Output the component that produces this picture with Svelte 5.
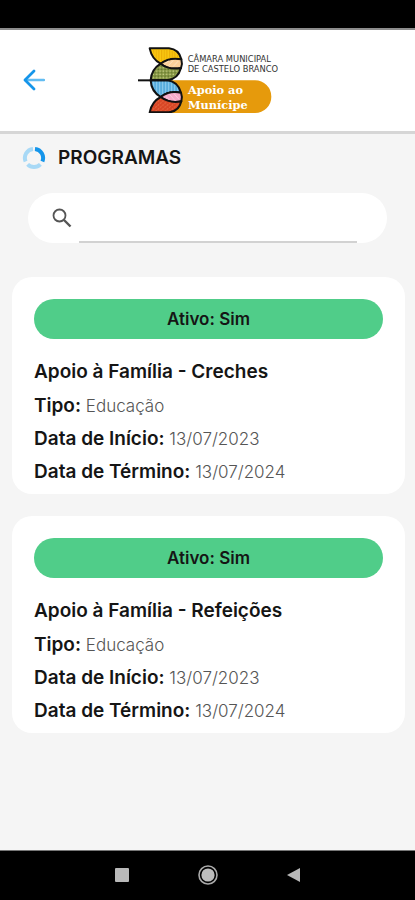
<script>
    let search = '';

    const programs = [
        { name: 'Apoio à Família - Creches', type: 'Educação', start: '13/07/2023', end: '13/07/2024', active: true },
        { name: 'Apoio à Família - Refeições', type: 'Educação', start: '13/07/2023', end: '13/07/2024', active: true }
    ];

    $: visible = programs.filter((p) => p.name.toLowerCase().includes(search.toLowerCase()));
</script>

<svelte:head>
    <title>Programas</title>
</svelte:head>

<div class="screen">
    <div class="status-bar"></div>

    <header>
        <button class="back" aria-label="Voltar">
            <svg width="22" height="22" viewBox="0 0 22 22" fill="none" stroke-linecap="round" stroke-linejoin="round">
                <path d="M2 11H21" stroke="#63bdf2" stroke-width="2.4" />
                <path d="M11 2L2 11L11 20" stroke="#1595ea" stroke-width="2.8" />
            </svg>
        </button>

        <svg class="logo" width="140" height="66" viewBox="27 21 420 198" role="img" aria-label="Câmara Municipal de Castelo Branco, Apoio ao Munícipe">
            <defs>
                <pattern id="stripes" width="8" height="8" patternUnits="userSpaceOnUse">
                    <path d="M2 0V8" stroke="#e09a00" stroke-width="2" />
                </pattern>
                <pattern id="dots" width="10" height="10" patternUnits="userSpaceOnUse">
                    <circle cx="3" cy="3" r="2" fill="#d7dc9a" />
                    <circle cx="8" cy="8" r="2" fill="#4f6425" />
                </pattern>
                <pattern id="waves" width="9" height="9" patternUnits="userSpaceOnUse">
                    <path d="M2 0V9" stroke="#a9dcf5" stroke-width="2" />
                </pattern>
                <pattern id="marks" width="14" height="12" patternUnits="userSpaceOnUse">
                    <path d="M2 4L6 2M9 10L13 8" stroke="#f58a5e" stroke-width="2" />
                </pattern>
            </defs>

            <path d="M125 121H378A49 49 0 0 1 378 219H100Z" fill="#e69a0c" />

            <g stroke="#111" stroke-width="6" stroke-linejoin="round">
                <path d="M62 25H120C140 27 153 41 157 58C135 55 112 59 95 71C76 61 66 45 62 25Z" fill="#f9c811" />
                <path d="M95 71C111 58 135 54 157 58C160 68 159 76 156 84C134 88 111 84 95 71Z" fill="#fbd09a" />
                <path d="M65 121C66 99 77 82 95 71C111 84 134 88 156 84C150 106 134 119 114 121Z" fill="#879744" />
                <path d="M65 121H114C134 123 150 137 156 158C134 154 111 158 95 171C77 160 66 143 65 121Z" fill="#58addd" />
                <path d="M95 171C111 158 134 154 156 158C159 166 160 174 157 184C135 188 112 184 95 171Z" fill="#f5abc9" />
                <path d="M62 217C66 197 76 181 95 171C112 184 135 188 157 184C153 201 140 215 120 217Z" fill="#d84726" />
                <path d="M27 121H116" fill="none" />
            </g>
            <path d="M70 29H119C136 31 147 42 151 54C132 52 112 56 96 67C80 57 73 44 70 29Z" fill="url(#stripes)" />
            <path d="M70 117C71 100 80 85 95 76C111 87 132 91 151 88C145 105 131 115 114 117Z" fill="url(#dots)" />
            <path d="M70 125H114C131 127 145 138 151 154C132 151 111 154 95 166C81 156 72 142 70 125Z" fill="url(#waves)" />
            <path d="M70 213C73 198 80 184 95 176C111 187 132 191 151 188C147 200 136 211 119 213Z" fill="url(#marks)" />
            <path d="M109 70L120 62M118 77L133 61M132 80L148 63M110 168L121 180M120 161L138 182M134 160L150 178" stroke="#fff" stroke-width="2" opacity="0.6" />

            <g class="council">
                <text x="176" y="67">CÂMARA MUNICIPAL</text>
                <text x="176" y="96">DE CASTELO BRANCO</text>
            </g>
            <g class="service">
                <text x="177" y="163">Apoio ao</text>
                <text x="177" y="206">Munícipe</text>
            </g>
        </svg>
    </header>

    <main>
        <div class="title">
            <svg width="24" height="24" viewBox="0 0 24 24" fill="none" stroke-width="4">
                <path d="M13 3A9 9 0 0 1 20.4 15.4" stroke="#1595ea" />
                <path d="M18.4 18.4A9 9 0 0 1 5.6 18.4" stroke="#a8d9f6" />
                <path d="M3.6 15.4A9 9 0 0 1 11 3" stroke="#a8d9f6" />
            </svg>
            <h1>PROGRAMAS</h1>
        </div>

        <label class="search">
            <svg width="20" height="20" viewBox="0 0 20 20" fill="none" stroke="#555" stroke-width="1.8">
                <circle cx="7.5" cy="7.5" r="6" />
                <path d="M12 12L18.5 18.5" stroke-width="2.4" />
            </svg>
            <input type="search" aria-label="Pesquisar programas" bind:value={search} />
        </label>

        {#each visible as program}
            <article class="card">
                <div class="badge">Ativo: {program.active ? 'Sim' : 'Não'}</div>
                <h2>{program.name}</h2>
                <p><strong>Tipo:</strong> {program.type}</p>
                <p><strong>Data de Início:</strong> {program.start}</p>
                <p><strong>Data de Término:</strong> {program.end}</p>
            </article>
        {/each}
    </main>

    <nav>
        <button aria-label="Recentes">
            <svg width="22" height="22" viewBox="0 0 22 22"><rect x="4" y="4" width="14" height="14" rx="1" fill="#b9b9b9" /></svg>
        </button>
        <button aria-label="Início">
            <svg width="22" height="22" viewBox="0 0 22 22">
                <circle cx="11" cy="11" r="9" fill="none" stroke="#aaa" stroke-width="1.6" />
                <circle cx="11" cy="11" r="6.6" fill="#bdbdbd" />
            </svg>
        </button>
        <button aria-label="Anterior">
            <svg width="22" height="22" viewBox="0 0 22 22"><path d="M4 11L17 4V18Z" fill="#b9b9b9" /></svg>
        </button>
    </nav>
</div>

<style>
    :global(body) {
        margin: 0;
        background: #f5f5f5;
    }

    .screen {
        display: flex;
        flex-direction: column;
        min-height: 100vh;
        background: #f5f5f5;
        color: #151515;
        font-family: Inter, "Liberation Sans", sans-serif;
    }

    .status-bar {
        height: 28px;
        background: #000;
        border-bottom: 2px solid #8c8c8c;
    }

    header {
        display: grid;
        grid-template-columns: 1fr auto 1fr;
        align-items: center;
        padding: 17px 20px 18px;
        background: #fff;
        border-bottom: 3px solid #d6d6d6;
    }

    button {
        display: flex;
        padding: 0;
        border: none;
        background: none;
        cursor: pointer;
    }

    .back {
        justify-self: start;
        padding: 3px;
    }

    main {
        flex: 1;
        padding: 0 10px 0 12px;
    }

    .title {
        display: flex;
        align-items: center;
        gap: 12px;
        padding: 12px 10px 0;
    }

    h1 {
        margin: 0;
        font-size: 19px;
        line-height: 24px;
        font-weight: 600;
    }

    .search {
        display: flex;
        align-items: center;
        gap: 7px;
        height: 50px;
        margin: 23px 18px 34px 16px;
        padding: 0 30px 0 24px;
        border-radius: 25px;
        background: #fff;
    }

    .search input {
        flex: 1;
        align-self: stretch;
        min-width: 0;
        padding: 0 8px;
        border: none;
        border-bottom: 2px solid #d2d2d2;
        border-radius: 0;
        outline: none;
        background: none;
        font: inherit;
    }

    .card {
        margin-bottom: 22px;
        padding: 22px 22px 5px;
        border-radius: 20px;
        background: #fff;
    }

    .badge {
        margin-bottom: 16px;
        border-radius: 20px;
        background: #50cd89;
        font-size: 17px;
        line-height: 40px;
        font-weight: 600;
        text-align: center;
    }

    h2,
    p {
        margin: 0;
        line-height: 33px;
    }

    h2 {
        margin-bottom: 2px;
    }

    h2,
    strong {
        font-size: 19px;
        font-weight: 600;
    }

    p {
        color: #555;
        font-size: 17px;
        font-weight: 300;
    }

    strong {
        color: #151515;
        line-height: 1;
    }

    nav {
        display: flex;
        justify-content: center;
        gap: 64px;
        padding: 13px 0 14px;
        background: #000;
        border-top: 1px solid #777;
    }

    .council {
        fill: #333;
        font-family: "DejaVu Sans", sans-serif;
        font-size: 25px;
    }

    .service {
        fill: #fff;
        font-family: "DejaVu Serif", serif;
        font-size: 34px;
        font-weight: 700;
    }
</style>
